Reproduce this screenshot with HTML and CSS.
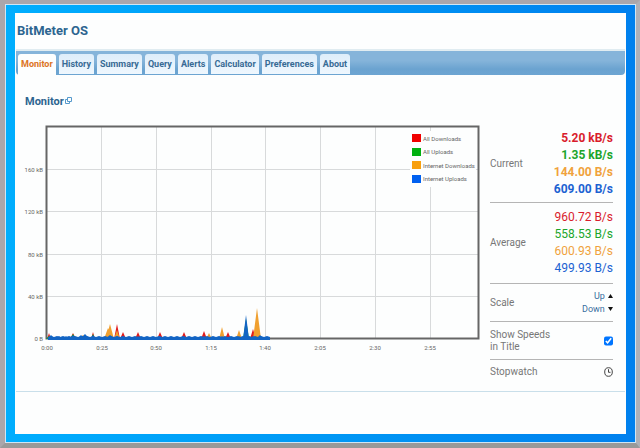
FILE: index.html
```html
<!DOCTYPE html>
<html lang="en">
<head>
    <meta charset="UTF-8">
    <meta name="viewport" content="width=device-width, initial-scale=1.0">
    <title>BitMeter OS</title>
    <link rel="stylesheet" href="styles.css">
</head>
<body>

<div class="desktop">
    <div class="window">
        <h1>BitMeter OS</h1>

        <nav class="tabs">
            <a href="#monitor" class="tab active">Monitor</a>
            <a href="#history" class="tab">History</a>
            <a href="#summary" class="tab">Summary</a>
            <a href="#query" class="tab">Query</a>
            <a href="#alerts" class="tab">Alerts</a>
            <a href="#calculator" class="tab">Calculator</a>
            <a href="#preferences" class="tab">Preferences</a>
            <a href="#about" class="tab">About</a>
        </nav>

        <main class="panel" id="monitor">
            <h2>Monitor
                <svg class="popout" viewBox="0 0 7 7" width="7" height="7">
                    <path d="M2.5 0.5h4v4h-4z M2.5 2.5h-2v4h4v-2" />
                </svg>
            </h2>

            <div class="monitor">
                <svg class="chart" id="chart" viewBox="0 0 456 230" role="img" aria-label="Network speed">
                    <g class="grid">
                        <path d="M77.5 5V216M132.5 5V216M187.5 5V216M241.5 5V216M296.5 5V216M351.5 5V216M406.5 5V216" />
                        <path d="M22 47.5H455M22 89.5H455M22 132.5H455M22 174.5H455" />
                    </g>
                    <rect class="frame" x="22.5" y="4.5" width="432" height="212" />
                    <g class="y-labels">
                        <text x="19" y="50">160 kB</text>
                        <text x="19" y="92">120 kB</text>
                        <text x="19" y="135">80 kB</text>
                        <text x="19" y="177">40 kB</text>
                        <text x="19" y="219">0 B</text>
                    </g>
                    <g class="x-labels">
                        <text x="23" y="228">0:00</text>
                        <text x="78" y="228">0:25</text>
                        <text x="132" y="228">0:50</text>
                        <text x="187" y="228">1:15</text>
                        <text x="241" y="228">1:40</text>
                        <text x="296" y="228">2:05</text>
                        <text x="351" y="228">2:30</text>
                        <text x="406" y="228">2:55</text>
                    </g>
                    <g id="series"></g>
                    <g class="legend">
                        <rect class="legend-bg" x="386" y="9" width="66" height="56" />
                        <rect class="all-down" x="388" y="12" width="9" height="8" />
                        <rect class="all-up" x="388" y="26" width="9" height="8" />
                        <rect class="net-down" x="388" y="39" width="9" height="8" />
                        <rect class="net-up" x="388" y="53" width="9" height="8" />
                        <text x="399" y="19">All Downloads</text>
                        <text x="399" y="32">All Uploads</text>
                        <text x="399" y="46">Internet Downloads</text>
                        <text x="399" y="59">Internet Uploads</text>
                    </g>
                </svg>

                <aside class="stats">
                    <div class="row">
                        <span>Current</span>
                        <div class="speeds current">
                            <div class="red">5.20 kB/s</div>
                            <div class="green">1.35 kB/s</div>
                            <div class="orange">144.00 B/s</div>
                            <div class="blue">609.00 B/s</div>
                        </div>
                    </div>
                    <div class="row">
                        <span>Average</span>
                        <div class="speeds">
                            <div class="red">960.72 B/s</div>
                            <div class="green">558.53 B/s</div>
                            <div class="orange">600.93 B/s</div>
                            <div class="blue">499.93 B/s</div>
                        </div>
                    </div>
                    <div class="row">
                        <span>Scale</span>
                        <div class="scale">
                            <a href="#up">Up <svg viewBox="0 0 5 4" width="5" height="4"><path d="M0 4L2.5 0L5 4z" /></svg></a>
                            <a href="#down">Down <svg viewBox="0 0 5 4" width="5" height="4"><path d="M0 0L2.5 4L5 0z" /></svg></a>
                        </div>
                    </div>
                    <div class="row">
                        <label for="show-speeds">Show Speeds<br>in Title</label>
                        <input type="checkbox" id="show-speeds" checked>
                    </div>
                    <div class="row">
                        <span>Stopwatch</span>
                        <button class="stopwatch" aria-label="Stopwatch">
                            <svg viewBox="0 0 9 10" width="9" height="10">
                                <ellipse cx="4.5" cy="5" rx="3.8" ry="4.3" />
                                <path d="M4.5 2.2V5.3H6.5" />
                            </svg>
                        </button>
                    </div>
                </aside>
            </div>
        </main>
    </div>
</div>

<script src="chart.js"></script>
</body>
</html>
```
FILE: styles.css
```css
* {
    box-sizing: border-box;
}

body {
    margin: 0;
    font-family: Roboto, "Liberation Sans", sans-serif;
    font-size: 10px;
    color: #777;
}

.desktop {
    display: flex;
    min-height: 100vh;
    padding: 9px 10px 9px;
    border: 4px solid #aaa6ab;
    border-width: 4px 4px 5px 5px;
    border-right-color: #aeb0b8;
    border-bottom-color: #999;
    box-shadow: inset 0 0 0 1px #cfe6f5;
    background: linear-gradient(to right, #00aefe, #0098f5 50%, #0080ee);
}

.window {
    flex: 1;
    padding: 9px 1px 0;
    background: #fdfefe;
}

h1 {
    margin: 0 0 10px 1px;
    font-size: 13px;
    line-height: 17px;
    color: #2d6590;
}

/* Tabs */
.tabs {
    display: flex;
    gap: 3px;
    height: 26px;
    padding: 3px 2px 1px;
    border-top: 2px solid #e0ecf1;
    border-radius: 0 0 4px 4px;
    background: linear-gradient(#85b4da 40%, #6ba3d0 75%, #6da5d2);
}

.tab {
    padding: 0 3px;
    border-radius: 3px 3px 0 0;
    background: linear-gradient(#deedfa, #eff7fe);
    font-size: 9px;
    font-weight: bold;
    line-height: 20px;
    color: #386b95;
    text-decoration: none;
}

.tab.active {
    margin-bottom: -1px;
    background: #fdfefe;
    color: #dc7424;
}

/* Monitor page */
.panel {
    padding: 19px 12px 7px 8px;
    border-bottom: 1px solid #c9dfea;
}

h2 {
    margin: 0 0 12px 1px;
    font-size: 11px;
    line-height: 16px;
    color: #2d6590;
}

.popout {
    margin-left: -1px;
    vertical-align: 1px;
    fill: none;
    stroke: #5599cc;
}

.monitor {
    display: flex;
    align-items: flex-start;
    gap: 10px;
}

.chart {
    flex: 1;
    min-width: 0;
    font-size: 6px;
}

.chart text {
    fill: #666;
}

.grid path {
    stroke: #d8dadb;
}

.frame {
    fill: none;
    stroke: #666;
    stroke-width: 2px;
}

.y-labels {
    text-anchor: end;
}

.x-labels {
    text-anchor: middle;
}

.legend-bg {
    fill: #fdfefe;
}

.all-down {
    fill: #f00000;
}

.all-up {
    fill: #00b010;
}

.net-down {
    fill: #f8a010;
}

.net-up {
    fill: #0060f0;
}

#series .all-down {
    fill: #e01c1c;
}

#series .net-down {
    fill: #f0a030;
}

#series .net-up {
    fill: #1264c4;
}

/* Speeds and settings */
.stats {
    width: 123px;
    padding-top: 4px;
}

.row {
    display: flex;
    align-items: center;
    justify-content: space-between;
    min-height: 38px;
    border-bottom: 1px solid #b5b5b5;
    line-height: 12px;
}

.row:last-child {
    min-height: 24px;
    border-bottom: none;
}

.speeds {
    padding: 6px 0;
    font-size: 12px;
    line-height: 17px;
    text-align: right;
}

.current {
    padding: 4px 0;
    font-weight: bold;
}

.red {
    color: #d91c2c;
}

.green {
    color: #1ba52b;
}

.orange {
    color: #f0a23c;
}

.blue {
    color: #1c62d2;
}

.scale a {
    display: block;
    font-size: 9px;
    line-height: 13px;
    text-align: right;
    color: #3a6fa0;
    text-decoration: none;
}

.scale svg {
    margin-left: 1px;
    vertical-align: 1px;
    fill: #111;
}

.row input {
    width: 9px;
    height: 10px;
    margin: 0;
    accent-color: #0075ff;
}

.stopwatch {
    display: flex;
    padding: 0;
    border: none;
    background: none;
}

.stopwatch svg {
    fill: none;
    stroke: #444;
}
```
FILE: chart.js
```javascript
const BASE = 217;
const END = 246;

// [x, height, half width] for each burst of traffic
const SERIES = [
    { name: 'all-down', peaks: [[25, 6, 2], [49, 6, 3], [69, 7, 2], [93, 15, 3], [99, 7, 3], [114, 7, 3], [136, 7, 3], [160, 7, 3], [180, 8, 3], [204, 7, 3], [229, 10, 3]] },
    { name: 'all-up', peaks: [[25, 3, 3], [49, 5, 3], [69, 5, 2], [222, 20, 3]] },
    { name: 'net-down', peaks: [[59, 4, 4], [84, 11, 4], [86, 15, 4], [93, 9, 3], [185, 6, 3], [198, 12, 3], [215, 9, 3], [233, 31, 4]] },
    { name: 'net-up', peaks: [[27, 4, 4], [35, 3, 4], [42, 3, 3], [49, 4, 4], [57, 4, 4], [61, 5, 5], [69, 4, 3], [86, 4, 5], [93, 3, 4], [99, 3, 3], [114, 3, 3], [136, 3, 3], [160, 3, 3], [180, 3, 4], [198, 3, 3], [215, 3, 3], [222, 24, 3], [229, 3, 3], [236, 4, 4]] }
];

const group = document.getElementById('series');

function addPath(className, d) {
    const path = document.createElementNS('http://www.w3.org/2000/svg', 'path');
    path.setAttribute('class', className);
    path.setAttribute('d', d);
    group.appendChild(path);
}

SERIES.forEach(({ name, peaks }) => {
    const d = peaks.map(([x, h, w]) => `M${x - w} ${BASE}L${x} ${BASE - h}L${x + w} ${BASE}z`).join('');
    addPath(name, d);
});

// Steady idle traffic along the axis
let idle = `M24 ${BASE + 1}`;
for (let x = 24; x <= END; x += 3) {
    idle += `L${x} ${BASE - 2 - (x % 2)}`;
}
addPath('net-up', `${idle}L${END} ${BASE + 1}z`);
```
